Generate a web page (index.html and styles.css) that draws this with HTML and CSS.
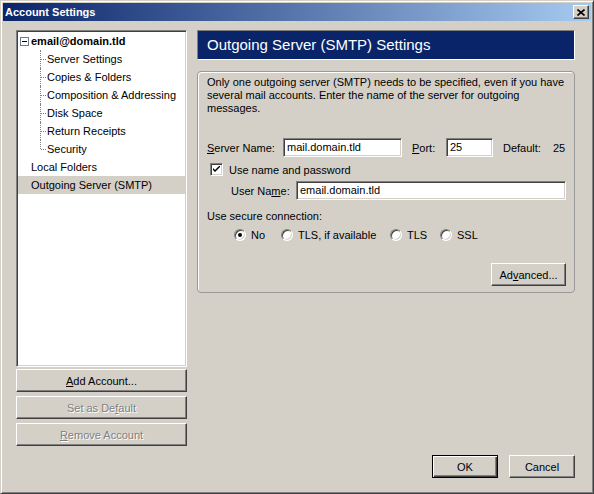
FILE: index.html
```html
<!DOCTYPE html>
<html lang="en">
  <head>
    <meta charset="UTF-8" />
    <title>Account Settings</title>
    <link rel="stylesheet" href="styles.css">
  </head>
  <body>
    <div class="window">
      <div class="titlebar">
        <span class="title">Account Settings</span>
        <span class="close">
          <svg width="8" height="7" viewBox="0 0 8 7">
            <path d="M0.5 0.5L7.5 6.5M0.5 6.5L7.5 0.5" stroke="#000" stroke-width="1.6" fill="none" />
          </svg>
        </span>
      </div>

      <div class="main">
        <div class="sidebar">
          <ul class="tree">
            <li class="row root"><span class="toggle"></span>email@domain.tld</li>
            <li class="row child">Server Settings</li>
            <li class="row child">Copies &amp; Folders</li>
            <li class="row child">Composition &amp; Addressing</li>
            <li class="row child">Disk Space</li>
            <li class="row child">Return Receipts</li>
            <li class="row child last">Security</li>
            <li class="row top">Local Folders</li>
            <li class="row top selected">Outgoing Server (SMTP)</li>
          </ul>
          <button class="btn side-btn"><u>A</u>dd Account...</button>
          <button class="btn side-btn" disabled>Set as De<u>f</u>ault</button>
          <button class="btn side-btn" disabled><u>R</u>emove Account</button>
        </div>

        <div class="panel">
          <div class="panel-header">Outgoing Server (SMTP) Settings</div>

          <div class="groupbox">
            <p class="desc">
              Only one outgoing server (SMTP) needs to be specified, even if you have<br>
              several mail accounts. Enter the name of the server for outgoing<br>
              messages.
            </p>

            <div class="field-row server-row">
              <label class="lbl-server"><u>S</u>erver Name:</label>
              <div class="textbox server-input">mail.domain.tld</div>
              <label class="lbl-port"><u>P</u>ort:</label>
              <div class="textbox port-input">25</div>
              <span class="default-lbl">Default:</span>
              <span class="default-val">25</span>
            </div>

            <div class="check-row">
              <span class="checkbox">
                <svg width="7" height="7" viewBox="0 0 7 7">
                  <path d="M0 2L0 4L2 6L7 1L7 -1L2 4Z" fill="#000" />
                </svg>
              </span>
              <span>Use name and password</span>
            </div>

            <div class="field-row user-row">
              <label class="lbl-user">User Na<u>m</u>e:</label>
              <div class="textbox user-input">email.domain.tld</div>
            </div>

            <div class="secure-lbl">Use secure connection:</div>

            <div class="radio-row">
              <span class="radio-item r-no"><span class="radio checked"></span>No</span>
              <span class="radio-item r-tlsif"><span class="radio"></span>TLS, if available</span>
              <span class="radio-item r-tls"><span class="radio"></span>TLS</span>
              <span class="radio-item"><span class="radio"></span>SSL</span>
            </div>

            <div class="advanced-row">
              <button class="btn advanced">Ad<u>v</u>anced...</button>
            </div>
          </div>

          <div class="dialog-buttons">
            <button class="btn default">OK</button>
            <button class="btn">Cancel</button>
          </div>
        </div>
      </div>
    </div>
  </body>
</html>
```

FILE: styles.css
```css
* {
  margin: 0;
  padding: 0;
  box-sizing: border-box;
}

body {
  font-family: "Liberation Sans", Arial, sans-serif;
  font-size: 11px;
  color: #000;
  background: #d4d0c8;
}

u {
  text-decoration: underline;
}

.window {
  display: flex;
  flex-direction: column;
  width: 594px;
  height: 494px;
  padding: 2px;
  background: #d4d0c8;
  border: 1px solid;
  border-color: #d4d0c8 #404040 #404040 #d4d0c8;
  box-shadow: inset 1px 1px #fff, inset -1px -1px #808080;
}

/* title bar */

.titlebar {
  display: flex;
  align-items: center;
  justify-content: space-between;
  height: 18px;
  padding: 0 2px 0 2px;
  background: linear-gradient(to right, #0a246a, #a6caf0);
}

.title {
  color: #fff;
  font-weight: bold;
  font-size: 11px;
}

.close {
  display: flex;
  align-items: center;
  justify-content: center;
  width: 16px;
  height: 14px;
  background: #d4d0c8;
  border: 1px solid;
  border-color: #fff #404040 #404040 #fff;
  box-shadow: inset -1px -1px #808080;
}

/* main area */

.main {
  flex: 1;
  display: flex;
  column-gap: 10px;
  padding: 9px 16px 13px 13px;
}

.sidebar {
  display: flex;
  flex-direction: column;
  width: 171px;
}

.tree {
  list-style: none;
  height: 337px;
  margin-bottom: 2px;
  background: #fff;
  border: 1px solid;
  border-color: #808080 #fff #fff #808080;
  box-shadow: inset 1px 1px #404040, inset -1px -1px #d4d0c8;
  padding: 1px;
}

.row {
  position: relative;
  height: 18px;
  line-height: 18px;
  white-space: nowrap;
}

.root {
  display: flex;
  align-items: center;
  padding-left: 2px;
  font-weight: bold;
}

.toggle {
  position: relative;
  width: 9px;
  height: 9px;
  margin-right: 2px;
  border: 1px solid #6d7a95;
  background: #fff;
}

.toggle::after {
  content: "";
  position: absolute;
  left: 1px;
  top: 3px;
  width: 5px;
  height: 1px;
  background: #000;
}

.child {
  padding-left: 29px;
}

.child::before {
  content: "";
  position: absolute;
  left: 22px;
  top: 0;
  height: 18px;
  border-left: 1px dotted #808080;
}

.child.last::before {
  height: 9px;
}

.child::after {
  content: "";
  position: absolute;
  left: 23px;
  top: 9px;
  width: 5px;
  border-top: 1px dotted #808080;
}

.top {
  padding-left: 13px;
}

.selected {
  background: #d4d0c8;
}

/* buttons */

.btn {
  font-family: inherit;
  font-size: 11px;
  color: #000;
  height: 23px;
  background: #d4d0c8;
  border: 1px solid;
  border-color: #fff #404040 #404040 #fff;
  box-shadow: inset -1px -1px #808080;
  text-align: center;
}

.btn:disabled {
  color: #808080;
  text-shadow: 1px 1px #fff;
}

.side-btn {
  width: 171px;
  margin-bottom: 4px;
}

/* right panel */

.panel {
  display: flex;
  flex-direction: column;
  width: 378px;
}

.panel-header {
  height: 30px;
  padding-left: 9px;
  line-height: 28px;
  font-size: 15px;
  color: #fff;
  background: #0a246a;
  border: 1px solid;
  border-color: #808080 #fff #fff #808080;
}

.groupbox {
  margin-top: 11px;
  height: 222px;
  padding: 4px 8px 0 9px;
  border: 1px solid #999;
  border-radius: 4px;
  box-shadow: inset 1px 1px #fff;
}

.desc {
  line-height: 13px;
}

.field-row {
  display: flex;
  align-items: center;
  height: 19px;
}

.server-row {
  margin-top: 23px;
}

.textbox {
  height: 19px;
  padding: 0 3px;
  line-height: 17px;
  background: #fff;
  border: 1px solid;
  border-color: #808080 #fff #fff #808080;
  box-shadow: inset 1px 1px #404040, inset -1px -1px #d4d0c8;
}

.lbl-server {
  width: 76px;
}

.server-input {
  width: 119px;
}

.lbl-port {
  width: 34px;
  margin-left: 10px;
}

.port-input {
  width: 47px;
}

.default-lbl {
  margin-left: 10px;
}

.default-val {
  margin-left: 12px;
}

.check-row {
  display: flex;
  align-items: center;
  column-gap: 6px;
  height: 13px;
  margin-top: 6px;
  padding-left: 3px;
}

.checkbox {
  display: flex;
  align-items: center;
  justify-content: center;
  width: 13px;
  height: 13px;
  background: #fff;
  border: 1px solid;
  border-color: #808080 #fff #fff #808080;
  box-shadow: inset 1px 1px #404040, inset -1px -1px #d4d0c8;
}

.user-row {
  margin-top: 5px;
  padding-left: 24px;
}

.lbl-user {
  width: 65px;
}

.user-input {
  width: 270px;
}

.secure-lbl {
  margin-top: 10px;
  line-height: 13px;
}

.radio-row {
  display: flex;
  align-items: center;
  height: 13px;
  margin-top: 5px;
  padding-left: 27px;
}

.radio-item {
  display: flex;
  align-items: center;
  column-gap: 5px;
}

.r-no {
  width: 47px;
}

.r-tlsif {
  width: 109px;
}

.r-tls {
  width: 50px;
}

.radio {
  position: relative;
  width: 12px;
  height: 12px;
  border-radius: 50%;
  background: #fff;
  border: 1px solid;
  border-color: #808080 #fff #fff #808080;
  box-shadow: inset 1px 1px #404040, inset -1px -1px #d4d0c8;
}

.radio.checked::after {
  content: "";
  position: absolute;
  left: 3px;
  top: 3px;
  width: 4px;
  height: 4px;
  border-radius: 50%;
  background: #000;
}

.advanced-row {
  display: flex;
  justify-content: flex-end;
  margin-top: 22px;
}

.advanced {
  width: 75px;
}

.dialog-buttons {
  display: flex;
  justify-content: flex-end;
  column-gap: 11px;
  margin-top: auto;
}

.dialog-buttons .btn {
  width: 66px;
}

.btn.default {
  border: 1px solid #000;
  box-shadow: inset 1px 1px #fff, inset -1px -1px #404040, inset -2px -2px #808080;
}
```
